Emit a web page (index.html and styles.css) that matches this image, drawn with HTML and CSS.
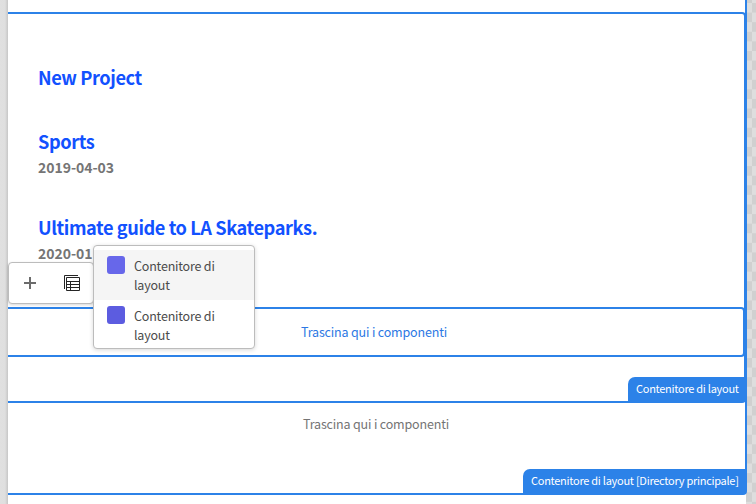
FILE: index.html
```html
<!DOCTYPE html>
<html lang="it">
<head>
<meta charset="utf-8">
<title>Editor</title>
<link rel="stylesheet" href="styles.css">
</head>
<body>
<div class="workspace">
  <main class="page">
    <section class="root">
      <div class="container">
        <article class="entry"><h2>New Project</h2></article>
        <article class="entry dated"><h2>Sports</h2><p>2019-04-03</p></article>
        <article class="entry dated last"><h2>Ultimate guide to LA Skateparks.</h2><p>2020-01</p></article>
        <div class="dropzone">Trascina qui i componenti</div>
        <div class="tag tag-inner">Contenitore di layout</div>
      </div>
      <div class="placeholder">Trascina qui i componenti</div>
      <div class="tag tag-root">Contenitore di layout [Directory principale]</div>
    </section>
    <div class="toolbar">
      <svg class="plus" viewBox="0 0 12 12"><path d="M6 0v12M0 6h12"/></svg>
      <svg class="layout" viewBox="0 0 16 16"><path d="M.5 14V.5H14M2.5 2.5h13v13h-13zM2.5 6.5h13M2.5 9.5h13M2.5 12.5h13M6.5 6.5v9"/></svg>
    </div>
    <ul class="menu">
      <li class="active"><i></i><span>Contenitore di layout</span></li>
      <li><i></i><span>Contenitore di layout</span></li>
    </ul>
  </main>
</div>
</body>
</html>
```
FILE: styles.css
```css
* { box-sizing: border-box; }
body {
  margin: 0;
  overflow: hidden;
  font-family: "Noto Sans CJK SC", "Open Sans", sans-serif;
}
.workspace {
  display: flex;
  height: 504px;
  padding-left: 8px;
  background:
    linear-gradient(90deg, #e0e0e0 0, #dfdfdf 5px, #c6c6c6 8px) 0 0 / 8px 100% no-repeat,
    repeating-conic-gradient(#dedede 0 25%, #d0d0d0 0 50%) 752px 3px / 19.2px 19.2px;
}
.page { position: relative; width: 738px; background: #fff; }
.root {
  position: relative;
  width: 739px;
  height: 495px;
  border: solid #2c82e8;
  border-width: 0 2px 2px 0;
  border-radius: 0 0 4px 0;
  padding-top: 12px;
  background: #fff;
}
.container {
  position: relative;
  width: 738px;
  height: 391px;
  border: solid #2c82e8;
  border-width: 2px 2px 2px 0;
  border-radius: 0 4px 4px 0;
  padding-top: 49px;
}
.entry { height: 64px; padding-left: 30px; }
.dated { height: 86px; }
.dated.last { height: 94px; }
h2 {
  margin: 0;
  font-size: 18.2px;
  line-height: 29px;
  letter-spacing: -.41px;
  color: #1251ff;
  font-weight: 700;
}
.entry p { margin: 0; font-size: 14px; line-height: 22px; letter-spacing: -.04px; font-weight: 700; color: #757575; }
.dropzone {
  width: 737px;
  height: 50px;
  border: solid #2c82e8;
  border-width: 2px 2px 2px 0;
  border-radius: 0 4px 4px 0;
  padding-right: 3px;
  text-align: center;
  font-size: 12.5px;
  line-height: 46px;
  letter-spacing: -.17px;
  color: #2c78e4;
}
.placeholder {
  margin-top: 10px;
  padding-right: 1px;
  text-align: center;
  font-size: 12.5px;
  line-height: 22px;
  letter-spacing: -.17px;
  color: #747474;
}
.tag {
  position: absolute;
  right: 0;
  background: #2c82e8;
  color: #fff;
  border-radius: 7px 0 0 0;
  font-size: 11px;
  line-height: 22px;
  letter-spacing: -.27px;
  padding-left: 8px;
  white-space: nowrap;
}
.tag-inner { bottom: -1px; width: 116px; height: 25px; }
.tag-root { bottom: 0; width: 222px; height: 24px; }
.toolbar {
  position: absolute;
  left: 0;
  top: 262px;
  width: 86px;
  height: 42px;
  display: flex;
  align-items: center;
  gap: 28px;
  padding-left: 15px;
  background: #fff;
  border: 1px solid #bcbcbc;
  border-radius: 4px;
  box-shadow: 0 1px 3px rgba(0, 0, 0, .16);
}
svg { flex: none; fill: none; }
.plus { width: 12px; height: 12px; stroke: #6b6b6b; stroke-width: 2; }
.layout { width: 16px; height: 16px; stroke: #252525; stroke-width: 1; }
.menu {
  position: absolute;
  left: 85px;
  top: 245px;
  width: 162px;
  height: 104px;
  margin: 0;
  padding: 4px 0 0;
  list-style: none;
  background: #fff;
  border: 1px solid #bcbcbc;
  border-radius: 4px;
  box-shadow: 0 1px 4px rgba(0, 0, 0, .16);
}
.menu li { display: flex; height: 50px; padding: 6px 24px 0 13px; gap: 9px; }
.menu .active { background: #f5f5f5; }
.menu i { flex: none; width: 18px; height: 18px; border-radius: 3px; background: #5c5ce0; }
.menu .active i { background: #6767ea; }
.menu span { font-size: 12.5px; line-height: 18.5px; letter-spacing: -.2px; color: #4b4b4b; padding-top: 1px; }
```
